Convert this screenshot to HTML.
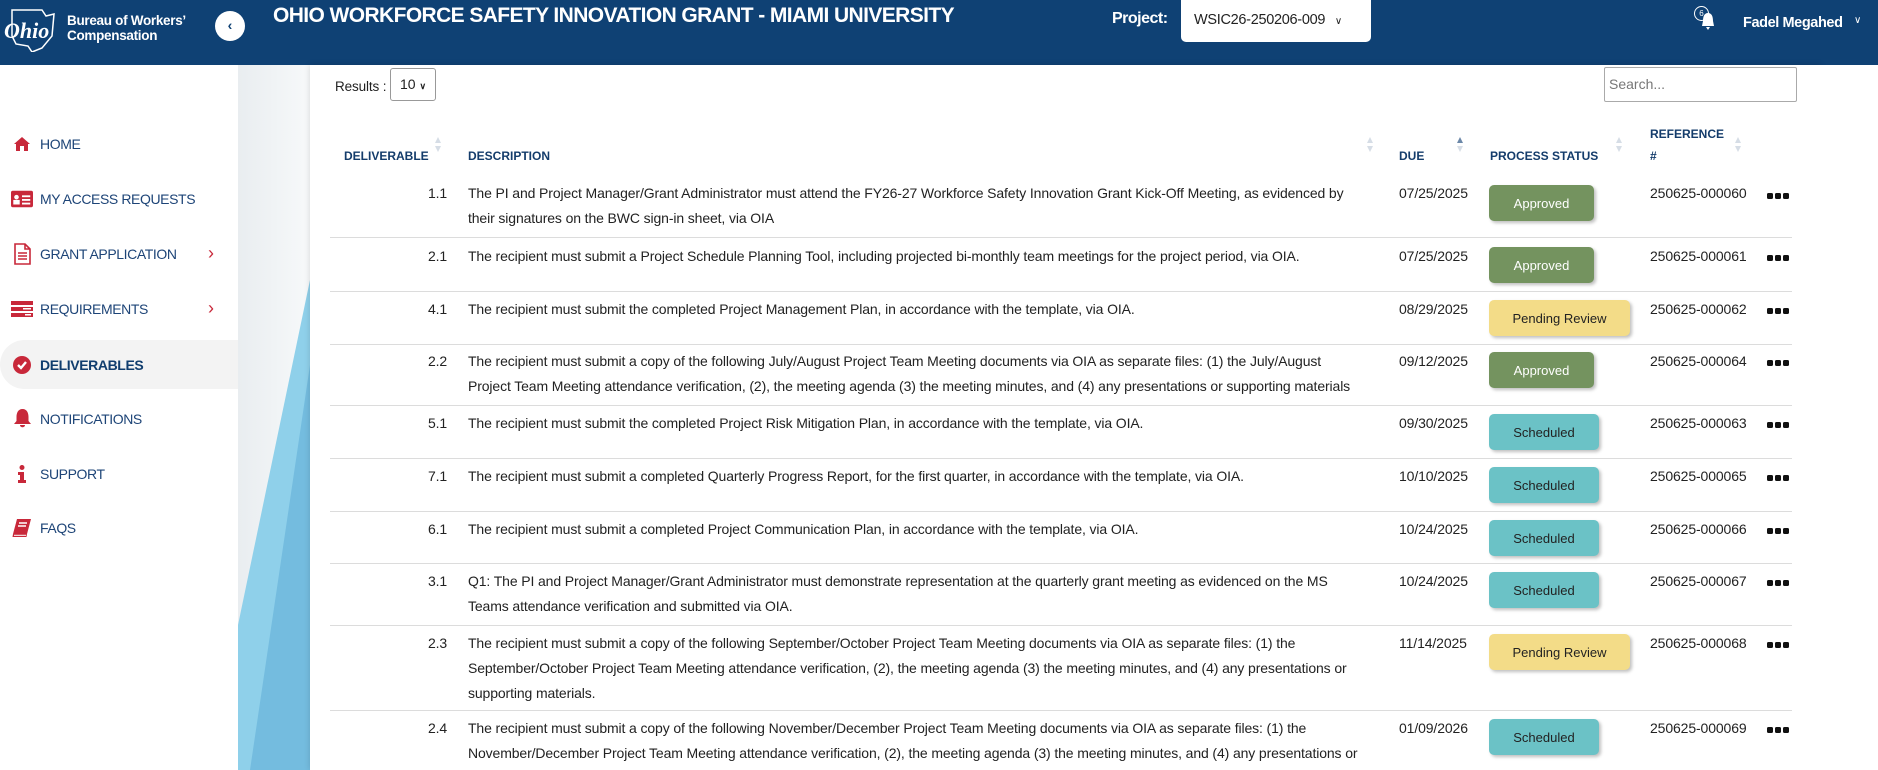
<!DOCTYPE html>
<html><head><meta charset="utf-8">
<style>
*{box-sizing:border-box;margin:0;padding:0}
html,body{width:1878px;height:770px;overflow:hidden}
body{background:#fff;font-family:"Liberation Sans",sans-serif;position:relative;color:#222}
.hdr{position:absolute;left:0;top:0;width:1878px;height:65px;background:#0f4174;color:#fff}
.side{position:absolute;left:0;top:65px;width:238px;height:705px;background:#fff}
.strip{position:absolute;left:238px;top:65px;width:72px;height:705px;background:linear-gradient(90deg,#e9edf0,#f7f9fa)}
.card{position:absolute;left:310px;top:65px;width:1511px;height:705px;background:#fff;box-shadow:0 0 6px rgba(0,0,0,.15)}
.right{position:absolute;left:1821px;top:65px;width:57px;height:705px;background:#fff}
.mi{position:absolute;left:0;width:238px;height:49px;display:flex;align-items:center;font-size:14px;color:#1d4477;letter-spacing:-.4px}
.mi .ic{width:22px;margin-left:11px;margin-right:7px;display:flex;justify-content:center}
.mi .ch{position:absolute;left:208px;color:#c8283a;font-size:18px}
.act{background:#f3f3f3;border-radius:25px 0 0 25px;font-weight:bold;color:#103d6e}
.t{position:absolute;font-size:14px;letter-spacing:-.12px;line-height:25px;white-space:nowrap;color:#222}
.th{position:absolute;font-size:12px;font-weight:bold;color:#143c6b;white-space:nowrap;line-height:22px}
.ln{position:absolute;left:330px;width:1462px;height:1px;background:#dcdcdc}
.b{position:absolute;left:1489px;height:36px;border-radius:5px;font-size:13px;display:flex;align-items:center;justify-content:center;box-shadow:2px 2px 3px rgba(0,0,0,.25)}
.ap{width:105px;background:#74935f;color:#fff}
.pe{width:141px;background:#f3dc88;color:#222}
.sc{width:110px;background:#6bc2c6;color:#222}
.dots{position:absolute;left:1767px;width:22px;height:6px;display:flex;justify-content:space-between}
.dots i{display:block;width:6px;height:6px;border-radius:1.5px;background:#111}
.sa{position:absolute;width:8px;height:16px}
</style></head><body>
<div class="hdr">
 <svg style="position:absolute;left:2px;top:6px" width="54" height="46" viewBox="0 0 54 46"><path d="M10 4 L40 4 L44 10 L52 8 L50 30 L40 42 L30 46 L26 40 L14 38 L10 30 Z" fill="none" stroke="#fff" stroke-width="1.5"/><text x="2" y="32" font-family="Liberation Serif" font-style="italic" font-weight="bold" font-size="22" fill="#fff">Ohio</text></svg>
 <div style="position:absolute;left:67px;top:13px;font-size:13.5px;font-weight:bold;line-height:15px;letter-spacing:-.3px">Bureau of Workers’<br>Compensation</div>
 <div style="position:absolute;left:215px;top:11px;width:30px;height:30px;border-radius:50%;background:#fff;color:#0f4174;font-size:14px;font-weight:bold;text-align:center;line-height:29px">‹</div>
 <div style="position:absolute;left:273px;top:4px;font-size:21px;font-weight:bold;letter-spacing:-.6px">OHIO WORKFORCE SAFETY INNOVATION GRANT - MIAMI UNIVERSITY</div>
 <div style="position:absolute;left:1112px;top:10px;font-size:16px;font-weight:bold;letter-spacing:-.5px">Project:</div>
 <div style="position:absolute;left:1181px;top:0;width:190px;height:42px;background:#fff;border-radius:0 0 5px 5px;color:#222;font-size:14.5px;letter-spacing:-.3px;padding:12px 0 0 13px;white-space:nowrap">WSIC26-250206-009 <span style="font-size:10px;margin-left:6px">&#8744;</span></div>
 <div style="position:absolute;left:1694px;top:6px;width:15px;height:15px;border:1px solid #fff;border-radius:50%;font-size:8px;text-align:center;line-height:13px">6</div>
 <svg style="position:absolute;left:1701px;top:11px" width="14" height="20" viewBox="0 0 14 20"><path d="M7 2 C3 2 2 6 2 10 L1 15 L13 15 L12 10 C12 6 11 2 7 2Z M5 16 L9 16 L7 19Z" fill="#fff"/></svg>
 <div style="position:absolute;left:1743px;top:15px;font-size:14.5px;font-weight:bold;letter-spacing:-.4px">Fadel Megahed</div>
 <div style="position:absolute;left:1854px;top:15px;font-size:10px">&#8744;</div>
</div>
<div class="side">
 <div class="mi" style="top:54px"><span class="ic"><svg width="18" height="16" viewBox="0 0 18 16"><path d="M9 1 L1 8 L3 8 L3 15 L7 15 L7 10 L11 10 L11 15 L15 15 L15 8 L17 8 Z" fill="#c8283a"/></svg></span>HOME</div>
 <div class="mi" style="top:109px"><span class="ic"><svg width="24" height="18" viewBox="0 0 24 18"><rect x="0" y="0" width="24" height="18" rx="2" fill="#c8283a"/><circle cx="6" cy="7" r="2.5" fill="#fff"/><rect x="2.5" y="10" width="7" height="5" fill="#fff"/><rect x="12" y="5" width="9" height="2" fill="#fff"/><rect x="12" y="9" width="9" height="2" fill="#fff"/><rect x="12" y="13" width="9" height="2" fill="#fff"/></svg></span>MY ACCESS REQUESTS</div>
 <div class="mi" style="top:164px"><span class="ic"><svg width="18" height="22" viewBox="0 0 18 22"><path d="M2 1 L12 1 L17 6 L17 21 L2 21 Z M12 1 L12 6 L17 6" fill="none" stroke="#c8283a" stroke-width="1.6"/><path d="M5 10 H14 M5 13 H14 M5 16 H14" stroke="#c8283a" stroke-width="1.5"/></svg></span>GRANT APPLICATION<span class="ch">&#x203A;</span></div>
 <div class="mi" style="top:219px"><span class="ic"><svg width="22" height="16" viewBox="0 0 22 16"><rect x="0" y="0" width="22" height="4" fill="#c8283a"/><rect x="0" y="6" width="22" height="4" fill="#c8283a"/><rect x="0" y="12" width="22" height="4" fill="#c8283a"/><rect x="12" y="7" width="8" height="1.5" fill="#fff"/><rect x="14" y="13" width="6" height="1.5" fill="#fff"/></svg></span>REQUIREMENTS<span class="ch">&#x203A;</span></div>
 <div class="mi act" style="top:275px"><span class="ic"><svg width="18" height="18" viewBox="0 0 18 18"><circle cx="9" cy="9" r="9" fill="#c8283a"/><path d="M5 9 L8 12 L13 6" fill="none" stroke="#fff" stroke-width="2.4"/></svg></span>DELIVERABLES</div>
 <div class="mi" style="top:329px"><span class="ic"><svg width="19" height="21" viewBox="0 0 19 21"><path d="M9.5 1 C5 1 3.5 5 3.5 9 L3.5 13 L1 16 L18 16 L15.5 13 L15.5 9 C15.5 5 14 1 9.5 1Z M7 17 L12 17 C12 20 7 20 7 17Z" fill="#c8283a"/></svg></span>NOTIFICATIONS</div>
 <div class="mi" style="top:384px"><span class="ic"><svg width="10" height="18" viewBox="0 0 10 18"><circle cx="5" cy="2.5" r="2.5" fill="#c8283a"/><path d="M1 7 L7 7 L7 15 L9 15 L9 18 L1 18 L1 15 L3 15 L3 10 L1 10Z" fill="#c8283a"/></svg></span>SUPPORT</div>
 <div class="mi" style="top:438px"><span class="ic"><svg width="20" height="18" viewBox="0 0 20 18"><path d="M5 0 L19 0 L15 15 L1 15 Z" fill="#c8283a"/><path d="M1 15 L15 15 L14.5 18 L0.5 18Z" fill="#c8283a"/><path d="M7 4 H15 M6 7 H14" stroke="#fff" stroke-width="1.4"/><path d="M2 16.3 H14" stroke="#fff" stroke-width="1"/></svg></span>FAQS</div>
</div>
<div class="strip"></div>
<svg style="position:absolute;left:238px;top:65px" width="72" height="705"><polygon points="72,215 72,705 0,705 0,560" fill="#8fd0ea"/><polygon points="72,300 72,705 12,705" fill="#74bcdf"/></svg>
<div class="card"></div>
<div class="right"></div>

<div class="t" style="left:335px;top:74px;font-size:13.5px">Results :</div>
<div style="position:absolute;left:390px;top:68px;width:46px;height:33px;border:1px solid #999;border-radius:3px;font-size:14px;padding:7px 0 0 9px">10 <span style="font-size:9px;font-weight:bold">&#8744;</span></div>
<div style="position:absolute;left:1604px;top:67px;width:193px;height:35px;border:1px solid #aaa;border-radius:2px;font-size:14px;color:#777;padding:8px 0 0 4px">Search...</div>

<div class="th" style="left:344px;top:145px">DELIVERABLE</div>
<div class="th" style="left:468px;top:145px">DESCRIPTION</div>
<div class="th" style="left:1399px;top:145px">DUE</div>
<div class="th" style="left:1490px;top:145px">PROCESS STATUS</div>
<div class="th" style="left:1650px;top:123px">REFERENCE<br>#</div>
<svg class="sa" style="left:434px;top:137px"><path d="M4 0 L7 6 L1 6Z M1 9 L7 9 L4 15Z" fill="#d6dde6"/></svg>
<svg class="sa" style="left:1366px;top:137px"><path d="M4 0 L7 6 L1 6Z M1 9 L7 9 L4 15Z" fill="#d6dde6"/></svg>
<svg class="sa" style="left:1456px;top:137px"><path d="M4 0 L7 6 L1 6Z" fill="#6b87a8"/><path d="M1 9 L7 9 L4 15Z" fill="#d6dde6"/></svg>
<svg class="sa" style="left:1615px;top:137px"><path d="M4 0 L7 6 L1 6Z M1 9 L7 9 L4 15Z" fill="#d6dde6"/></svg>
<svg class="sa" style="left:1734px;top:137px"><path d="M4 0 L7 6 L1 6Z M1 9 L7 9 L4 15Z" fill="#d6dde6"/></svg>

<div class="t" style="left:428px;top:181px">1.1</div>
<div class="t" style="left:468px;top:181px">The PI and Project Manager/Grant Administrator must attend the FY26-27 Workforce Safety Innovation Grant Kick-Off Meeting, as evidenced by<br>their signatures on the BWC sign-in sheet, via OIA</div>
<div class="t" style="left:1399px;top:181px">07/25/2025</div>
<div class="b ap" style="top:185px">Approved</div>
<div class="t" style="left:1650px;top:181px">250625-000060</div>
<div class="dots" style="top:193px"><i></i><i></i><i></i></div>
<div class="ln" style="top:237px"></div>

<div class="t" style="left:428px;top:244px">2.1</div>
<div class="t" style="left:468px;top:244px">The recipient must submit a Project Schedule Planning Tool, including projected bi-monthly team meetings for the project period, via OIA.</div>
<div class="t" style="left:1399px;top:244px">07/25/2025</div>
<div class="b ap" style="top:247px">Approved</div>
<div class="t" style="left:1650px;top:244px">250625-000061</div>
<div class="dots" style="top:255px"><i></i><i></i><i></i></div>
<div class="ln" style="top:291px"></div>

<div class="t" style="left:428px;top:297px">4.1</div>
<div class="t" style="left:468px;top:297px">The recipient must submit the completed Project Management Plan, in accordance with the template, via OIA.</div>
<div class="t" style="left:1399px;top:297px">08/29/2025</div>
<div class="b pe" style="top:300px">Pending Review</div>
<div class="t" style="left:1650px;top:297px">250625-000062</div>
<div class="dots" style="top:308px"><i></i><i></i><i></i></div>
<div class="ln" style="top:344px"></div>

<div class="t" style="left:428px;top:349px">2.2</div>
<div class="t" style="left:468px;top:349px">The recipient must submit a copy of the following July/August Project Team Meeting documents via OIA as separate files: (1) the July/August<br>Project Team Meeting attendance verification, (2), the meeting agenda (3) the meeting minutes, and (4) any presentations or supporting materials</div>
<div class="t" style="left:1399px;top:349px">09/12/2025</div>
<div class="b ap" style="top:352px">Approved</div>
<div class="t" style="left:1650px;top:349px">250625-000064</div>
<div class="dots" style="top:360px"><i></i><i></i><i></i></div>
<div class="ln" style="top:405px"></div>

<div class="t" style="left:428px;top:411px">5.1</div>
<div class="t" style="left:468px;top:411px">The recipient must submit the completed Project Risk Mitigation Plan, in accordance with the template, via OIA.</div>
<div class="t" style="left:1399px;top:411px">09/30/2025</div>
<div class="b sc" style="top:414px">Scheduled</div>
<div class="t" style="left:1650px;top:411px">250625-000063</div>
<div class="dots" style="top:422px"><i></i><i></i><i></i></div>
<div class="ln" style="top:458px"></div>

<div class="t" style="left:428px;top:464px">7.1</div>
<div class="t" style="left:468px;top:464px">The recipient must submit a completed Quarterly Progress Report, for the first quarter, in accordance with the template, via OIA.</div>
<div class="t" style="left:1399px;top:464px">10/10/2025</div>
<div class="b sc" style="top:467px">Scheduled</div>
<div class="t" style="left:1650px;top:464px">250625-000065</div>
<div class="dots" style="top:475px"><i></i><i></i><i></i></div>
<div class="ln" style="top:511px"></div>

<div class="t" style="left:428px;top:517px">6.1</div>
<div class="t" style="left:468px;top:517px">The recipient must submit a completed Project Communication Plan, in accordance with the template, via OIA.</div>
<div class="t" style="left:1399px;top:517px">10/24/2025</div>
<div class="b sc" style="top:520px">Scheduled</div>
<div class="t" style="left:1650px;top:517px">250625-000066</div>
<div class="dots" style="top:528px"><i></i><i></i><i></i></div>
<div class="ln" style="top:563px"></div>

<div class="t" style="left:428px;top:569px">3.1</div>
<div class="t" style="left:468px;top:569px">Q1: The PI and Project Manager/Grant Administrator must demonstrate representation at the quarterly grant meeting as evidenced on the MS<br>Teams attendance verification and submitted via OIA.</div>
<div class="t" style="left:1399px;top:569px">10/24/2025</div>
<div class="b sc" style="top:572px">Scheduled</div>
<div class="t" style="left:1650px;top:569px">250625-000067</div>
<div class="dots" style="top:580px"><i></i><i></i><i></i></div>
<div class="ln" style="top:625px"></div>

<div class="t" style="left:428px;top:631px">2.3</div>
<div class="t" style="left:468px;top:631px">The recipient must submit a copy of the following September/October Project Team Meeting documents via OIA as separate files: (1) the<br>September/October Project Team Meeting attendance verification, (2), the meeting agenda (3) the meeting minutes, and (4) any presentations or<br>supporting materials.</div>
<div class="t" style="left:1399px;top:631px">11/14/2025</div>
<div class="b pe" style="top:634px">Pending Review</div>
<div class="t" style="left:1650px;top:631px">250625-000068</div>
<div class="dots" style="top:642px"><i></i><i></i><i></i></div>
<div class="ln" style="top:710px"></div>

<div class="t" style="left:428px;top:716px">2.4</div>
<div class="t" style="left:468px;top:716px">The recipient must submit a copy of the following November/December Project Team Meeting documents via OIA as separate files: (1) the<br>November/December Project Team Meeting attendance verification, (2), the meeting agenda (3) the meeting minutes, and (4) any presentations or</div>
<div class="t" style="left:1399px;top:716px">01/09/2026</div>
<div class="b sc" style="top:719px">Scheduled</div>
<div class="t" style="left:1650px;top:716px">250625-000069</div>
<div class="dots" style="top:727px"><i></i><i></i><i></i></div>
</body></html>
